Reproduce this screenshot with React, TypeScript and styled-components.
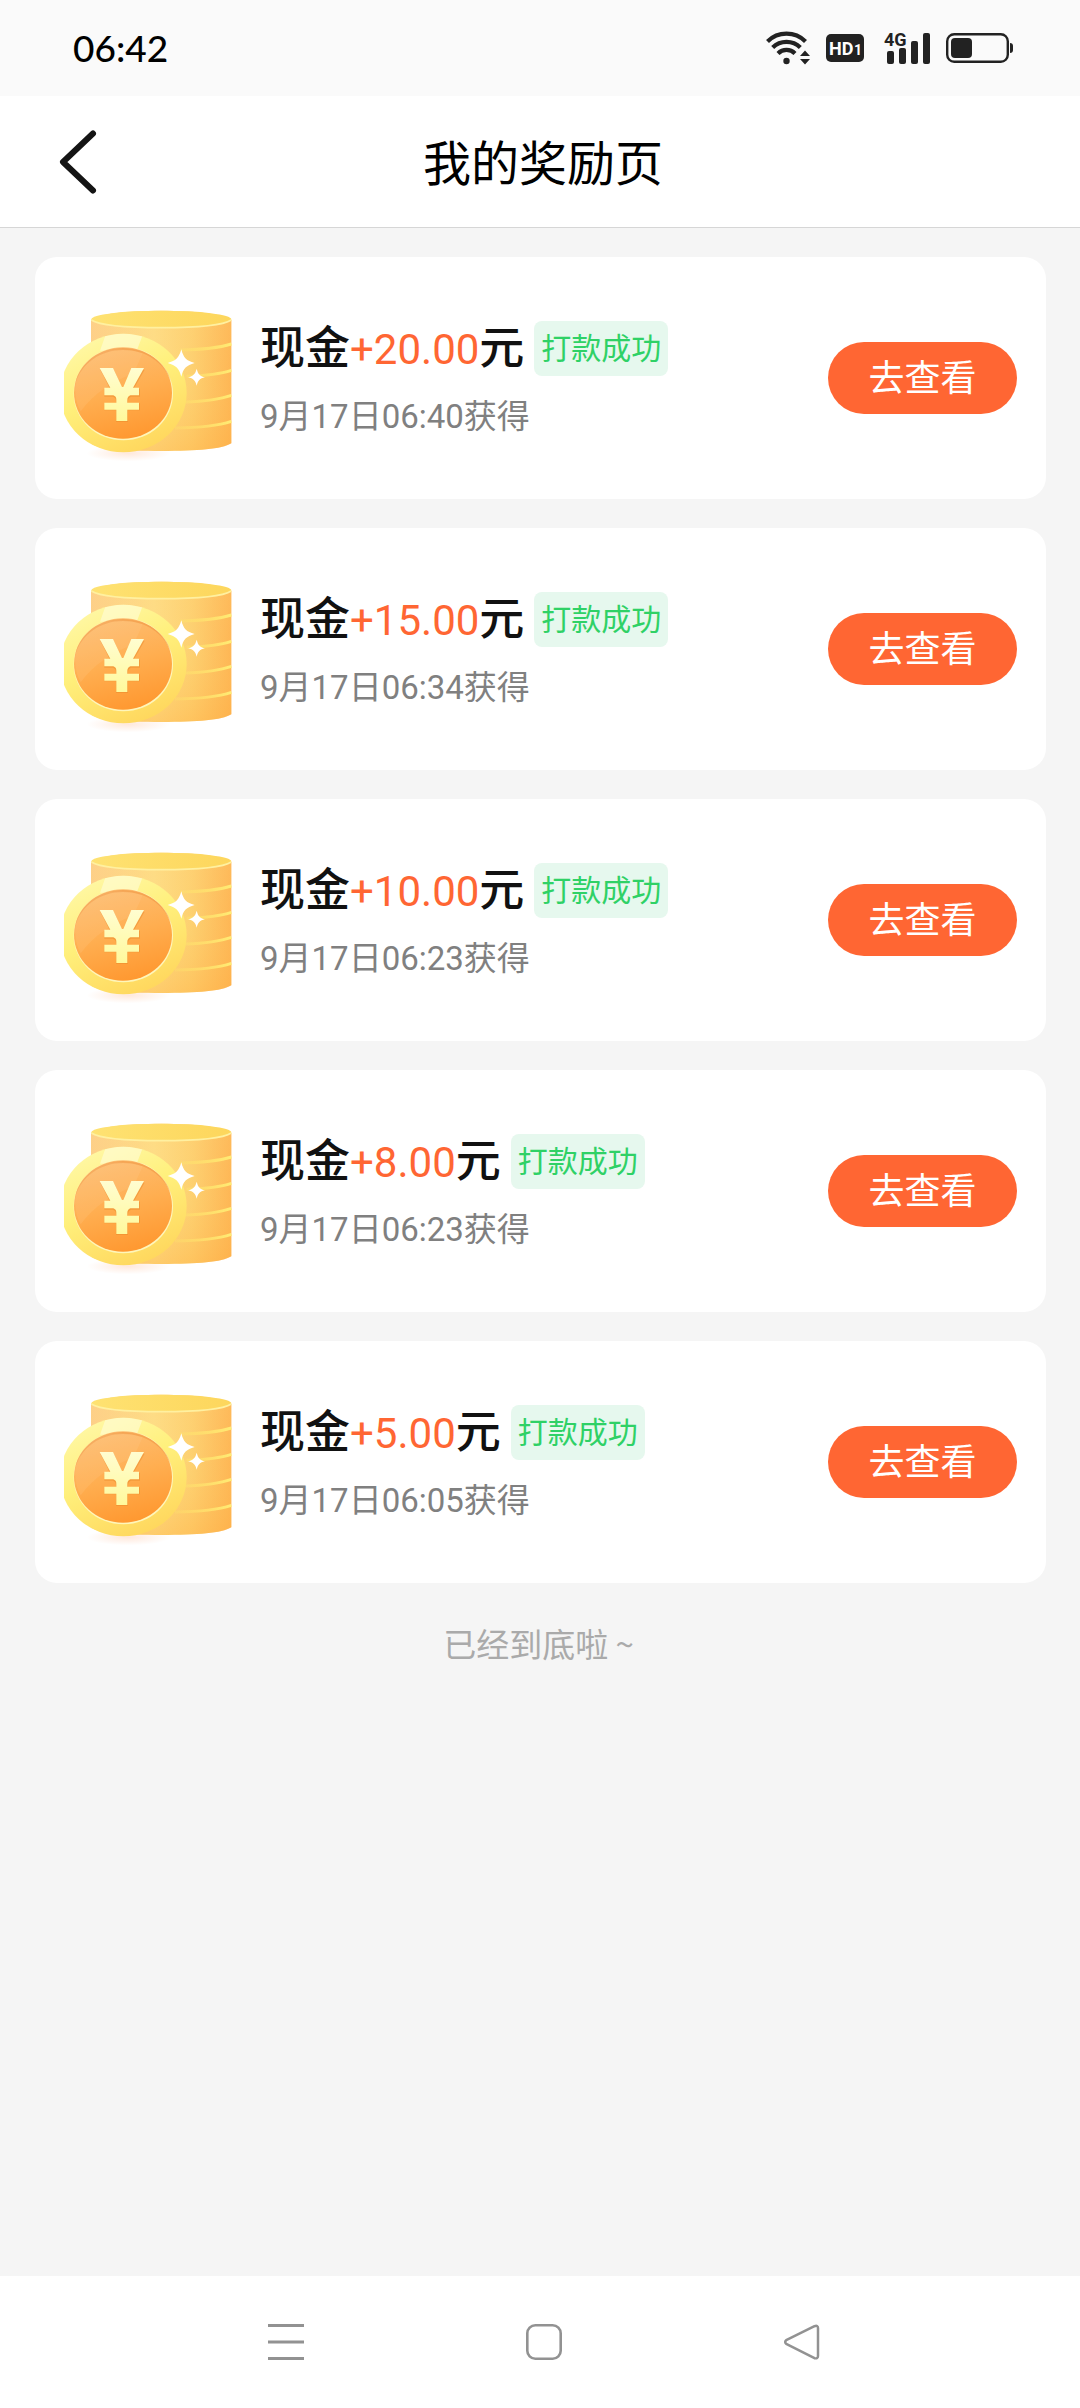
import React from "react";
import styled, { createGlobalStyle } from "styled-components";

const GlobalStyle = createGlobalStyle`
  *, *::before, *::after { box-sizing: border-box; }
  body {
    margin: 0;
    background: #f5f5f5;
    font-family: Roboto, "Noto Sans CJK SC", sans-serif;
  }
  button { font: inherit; border: 0; margin: 0; padding: 0; background: none; cursor: pointer; }
  svg { display: block; flex: none; }
`;

const Page = styled.div`
  min-height: 100vh;
  display: flex;
  flex-direction: column;
  background: #f5f5f5;
`;

const StatusBar = styled.div`
  height: 96px;
  padding: 0 67px 0 73px;
  display: flex;
  align-items: center;
  justify-content: space-between;
  background: #fafafa;
`;

const Clock = styled.time`
  font-family: Lato, sans-serif;
  font-size: 37px;
  font-weight: 500;
  line-height: 48px;
  color: #000;
`;

const StatusIcons = styled.div`
  display: flex;
  align-items: center;
  gap: 16px;
`;

const Header = styled.header`
  height: 132px;
  padding: 0 42px 0 48px;
  display: grid;
  grid-template-columns: 60px 1fr 60px;
  align-items: center;
  background: #fff;
  border-bottom: 1px solid #d6d6d6;
`;

const BackButton = styled.button`
  width: 60px;
  height: 80px;
  display: flex;
  align-items: center;
`;

const Title = styled.h1`
  margin: 0;
  padding-top: 6px;
  font-size: 48px;
  font-weight: 400;
  line-height: 64px;
  text-align: center;
  color: #000;
`;

const Content = styled.main`
  flex: 1;
  padding: 29px 34px 0 35px;
`;

const RewardList = styled.ul`
  margin: 0;
  padding: 0;
  list-style: none;
  display: flex;
  flex-direction: column;
  gap: 29px;
`;

const RewardCard = styled.li`
  height: 242px;
  padding: 0 29px;
  display: flex;
  align-items: center;
  gap: 28px;
  background: #fff;
  border-radius: 22px;
`;

const RewardInfo = styled.div`
  flex: 1;
  display: flex;
  flex-direction: column;
  gap: 21px;
`;

const RewardTitle = styled.div`
  display: flex;
  align-items: center;
  gap: 10px;
`;

const RewardName = styled.h2`
  margin: 0;
  font-size: 45px;
  font-weight: 500;
  line-height: 55px;
  color: #111;
`;

const Amount = styled.span`
  font-size: 42px;
  font-weight: 400;
  color: #ff6633;
`;

const Badge = styled.span`
  height: 55px;
  padding: 0 7px;
  font-size: 30px;
  font-weight: 400;
  line-height: 55px;
  color: #2fd166;
  background: #e6f8ee;
  border-radius: 8px;
`;

const Earned = styled.p`
  margin: 0;
  font-size: 33px;
  font-weight: 400;
  line-height: 38px;
  color: #808080;
`;

const ViewButton = styled.button`
  && {
    width: 189px;
    height: 72px;
    padding-top: 2px;
    font-size: 36px;
    line-height: 70px;
    color: #fff;
    background: #ff6633;
    border-radius: 36px;
  }
`;

const EndNote = styled.p`
  margin: 0;
  padding: 40px 4px 40px 0;
  font-family: "Noto Sans CJK SC", sans-serif;
  font-size: 33px;
  line-height: 40px;
  text-align: center;
  color: #aaa;
`;

const NavBar = styled.nav`
  height: 132px;
  padding-left: 8px;
  display: flex;
  justify-content: center;
  background: #fff;
`;

const NavButton = styled.button`
  width: 258px;
  display: flex;
  align-items: center;
  justify-content: center;
`;

const rewards = [
  { amount: "+20.00", time: "06:40" },
  { amount: "+15.00", time: "06:34" },
  { amount: "+10.00", time: "06:23" },
  { amount: "+8.00", time: "06:23" },
  { amount: "+5.00", time: "06:05" },
];

const WifiIcon = () => (
  <svg width="44" height="36" viewBox="0 0 44 36" aria-label="Wi-Fi">
    <g fill="none" stroke="#222" strokeWidth="4.2">
      <path d="M1.5 11.5a27 27 0 0 1 38 0" />
      <path d="M6.7 17.5a19.500 19.500 0 0 1 27.600 0" />
      <path d="M12 23.500a12 12 0 0 1 17 0" />
    </g>
    <circle cx="20.500" cy="31" r="3.200" fill="#222" />
    <path d="M39 20.500l5 5.500H34zM39 34.500l5-5.500H34z" fill="#222" />
  </svg>
);

const HdIcon = () => (
  <svg width="38" height="28" viewBox="0 0 38 28" aria-label="HD1">
    <rect width="38" height="28" rx="5" fill="#222" />
    <text x="3" y="21" fill="#fff" fontFamily="Roboto, sans-serif" fontWeight="700" fontSize="18">
      HD
    </text>
    <text x="28" y="21" fill="#fff" fontFamily="Roboto, sans-serif" fontWeight="700" fontSize="14">
      1
    </text>
  </svg>
);

const SignalIcon = () => (
  <svg width="50" height="42" viewBox="0 -4 50 42" aria-label="4G">
    <text x="4" y="15" fill="#222" fontFamily="Roboto, sans-serif" fontWeight="700" fontSize="18">
      4G
    </text>
    <g fill="#222">
      <rect x="7" y="20" width="7" height="13" rx="2" />
      <rect x="19" y="17" width="7" height="16" rx="2" />
      <rect x="31" y="10" width="7" height="23" rx="2" />
      <rect x="43" y="2" width="7" height="31" rx="2" />
    </g>
  </svg>
);

const BatteryIcon = () => (
  <svg width="67" height="30" viewBox="0 0 67 30" aria-label="40%">
    <rect x="1.200" y="1.200" width="60.600" height="27.600" rx="7" fill="none" stroke="#222" strokeWidth="2.400" />
    <rect x="5" y="5" width="21" height="20" rx="4" fill="#222" />
    <path d="M64 10c2 0 3 1 3 3v4c0 2-1 3-3 3z" fill="#222" />
  </svg>
);

const BackIcon = () => (
  <svg width="60" height="66" viewBox="0 0 60 66" aria-hidden="true">
    <path
      d="M45 4.500L15 33l30 28.500"
      fill="none"
      stroke="#141414"
      strokeWidth="6"
      strokeLinecap="round"
      strokeLinejoin="round"
    />
  </svg>
);

const GradientDefs = styled.svg`
  position: absolute;
`;

const CoinGradients = () => (
  <GradientDefs width="0" height="0" aria-hidden="true">
    <defs>
      <linearGradient id="stackSide" x1="0" y1="0" x2="1" y2="0">
        <stop offset="0" stopColor="#fdcf8e" />
        <stop offset="0.450" stopColor="#fee08a" />
        <stop offset="0.720" stopColor="#fdd070" />
        <stop offset="1" stopColor="#feb04e" />
      </linearGradient>
      <linearGradient id="stackShade" x1="0" y1="0" x2="0" y2="1">
        <stop offset="0" stopColor="#ffd27a" stopOpacity="0.300" />
        <stop offset="0.500" stopColor="#ffd070" stopOpacity="0.200" />
        <stop offset="1" stopColor="#ffb347" stopOpacity="0.450" />
      </linearGradient>
      <linearGradient id="stackTop" x1="0" y1="0" x2="1" y2="0">
        <stop offset="0" stopColor="#fee272" />
        <stop offset="1" stopColor="#fdd65c" />
      </linearGradient>
      <linearGradient id="band" gradientUnits="userSpaceOnUse" x1="465" y1="0" x2="634" y2="0">
        <stop offset="0" stopColor="#ffe36a" stopOpacity="0.300" />
        <stop offset="1" stopColor="#ffec74" />
      </linearGradient>
      <linearGradient id="coinRim" x1="0.200" y1="0" x2="0.700" y2="1">
        <stop offset="0" stopColor="#fff8a8" />
        <stop offset="0.450" stopColor="#fff07c" />
        <stop offset="1" stopColor="#ffd65c" />
      </linearGradient>
      <linearGradient id="coinFace" x1="0.300" y1="0" x2="0.600" y2="1">
        <stop offset="0" stopColor="#fdbd72" />
        <stop offset="0.500" stopColor="#ffae50" />
        <stop offset="1" stopColor="#ff9830" />
      </linearGradient>
      <linearGradient id="yen" x1="0" y1="0" x2="0" y2="1">
        <stop offset="0" stopColor="#fffdd0" />
        <stop offset="1" stopColor="#fff99c" />
      </linearGradient>
      <radialGradient id="coinShadow">
        <stop offset="0" stopColor="#ffb48a" stopOpacity="0.300" />
        <stop offset="1" stopColor="#ffb48a" stopOpacity="0" />
      </radialGradient>
      <clipPath id="rimClip">
        <ellipse cx="310" cy="459" rx="190" ry="178" />
      </clipPath>
    </defs>
  </GradientDefs>
);

const stackPath = "M213 240C230 222 320 212 424 212s194 12 210 28v370c-30 18-100 23-210 23s-190-5-211-23z";

const CoinsIcon = () => (
  <svg width="168" height="168" viewBox="132 162 504 504" aria-hidden="true">
    <ellipse cx="325" cy="640" rx="125" ry="24" fill="url(#coinShadow)" />
    <path d={stackPath} fill="url(#stackSide)" />
    <path d={stackPath} fill="url(#stackShade)" />
    <g fill="none" stroke="url(#band)" strokeWidth="9">
      <path d="M480 330c60-1 115-6 154-18" />
      <path d="M500 409c55-2 100-7 134-18" />
      <path d="M495 486c55-2 104-8 139-20" />
      <path d="M465 564c70-1 130-7 169-20" />
    </g>
    <ellipse cx="424" cy="238" rx="210" ry="26" fill="url(#stackTop)" />
    <path d="M214 240c26 17 110 23 210 23s184-6 210-23" fill="none" stroke="#fff0a0" strokeWidth="5" />
    <ellipse cx="310" cy="459" rx="190" ry="178" fill="url(#coinRim)" />
    <g clipPath="url(#rimClip)">
      <path d="M262 270h112l-24 62h-110z" fill="#fffde0" opacity="0.550" />
    </g>
    <ellipse cx="310" cy="461" rx="149" ry="140" fill="#fff6ba" />
    <ellipse cx="309" cy="459" rx="147" ry="137" fill="url(#coinFace)" />
    <path d="M166 430C180 365 240 324 309 324s130 42 144 100c-22-58-76-94-144-94s-124 40-143 100z" fill="#ee9440" opacity="0.550" />
    <path d="M240 336c40-12 88-10 128 4l-28 62c-60 18-120 60-158 112-34-66-14-144 58-178z" fill="#ffd9a0" opacity="0.150" />
    <path
      d="M241 389h40l27 57h2l24-57h40l-33 57h19v24h-27q-9 4-9 13v7h36v21h-36v35h-36v-35h-35v-21h35v-7q0-10-9-13h-26v-24h17z"
      fill="#e98a2c"
      opacity="0.500"
    />
    <path
      d="M239 384h40l27 57h4l24-57h38l-33 59h18v23h-26q-9 4-9 13v9h35v21h-35v34h-33v-34h-36v-21h36v-9q0-10-9-13h-27v-23h18z"
      fill="url(#yen)"
    />
    <path d="M484 328c6 25 15 35 40 41-25 7-34 16-40 41-7-25-16-34-41-41 25-6 34-16 41-41z" fill="#fff" />
    <path d="M530 386c4 16 9 22 25 26-16 4-21 9-25 25-4-16-10-21-26-25 16-4 22-10 26-26z" fill="#fff" />
  </svg>
);

const MenuIcon = () => (
  <svg width="36" height="36" viewBox="0 0 36 36" aria-hidden="true">
    <path d="M0 1.500h36M0 18h36M0 34.500h36" stroke="#929292" strokeWidth="3" />
  </svg>
);

const HomeIcon = () => (
  <svg width="36" height="36" viewBox="0 0 36 36" aria-hidden="true">
    <rect x="1.300" y="1.300" width="33.400" height="33.400" rx="8" fill="none" stroke="#929292" strokeWidth="2.600" />
  </svg>
);

const ReturnIcon = () => (
  <svg width="36" height="36" viewBox="0 0 36 36" aria-hidden="true">
    <path
      d="M2.200 16.200L30.500 2.200Q34 1 34 4v28q0 3-3.500 2.200L2.200 19.800Q.2 18 2.200 16.200z"
      fill="none"
      stroke="#929292"
      strokeWidth="2.500"
      strokeLinejoin="round"
    />
  </svg>
);

export default function App() {
  return (
    <Page>
      <GlobalStyle />
      <CoinGradients />
      <StatusBar>
        <Clock>06:42</Clock>
        <StatusIcons>
          <WifiIcon />
          <HdIcon />
          <SignalIcon />
          <BatteryIcon />
        </StatusIcons>
      </StatusBar>
      <Header>
        <BackButton type="button" aria-label="返回">
          <BackIcon />
        </BackButton>
        <Title>我的奖励页</Title>
      </Header>
      <Content>
        <RewardList>
          {rewards.map((reward) => (
            <RewardCard key={reward.amount}>
              <CoinsIcon />
              <RewardInfo>
                <RewardTitle>
                  <RewardName>
                    现金<Amount>{reward.amount}</Amount>元
                  </RewardName>
                  <Badge>打款成功</Badge>
                </RewardTitle>
                <Earned>9月17日{reward.time}获得</Earned>
              </RewardInfo>
              <ViewButton type="button">去查看</ViewButton>
            </RewardCard>
          ))}
        </RewardList>
        <EndNote>已经到底啦 ~</EndNote>
      </Content>
      <NavBar>
        <NavButton type="button" aria-label="菜单">
          <MenuIcon />
        </NavButton>
        <NavButton type="button" aria-label="主页">
          <HomeIcon />
        </NavButton>
        <NavButton type="button" aria-label="返回">
          <ReturnIcon />
        </NavButton>
      </NavBar>
    </Page>
  );
}
